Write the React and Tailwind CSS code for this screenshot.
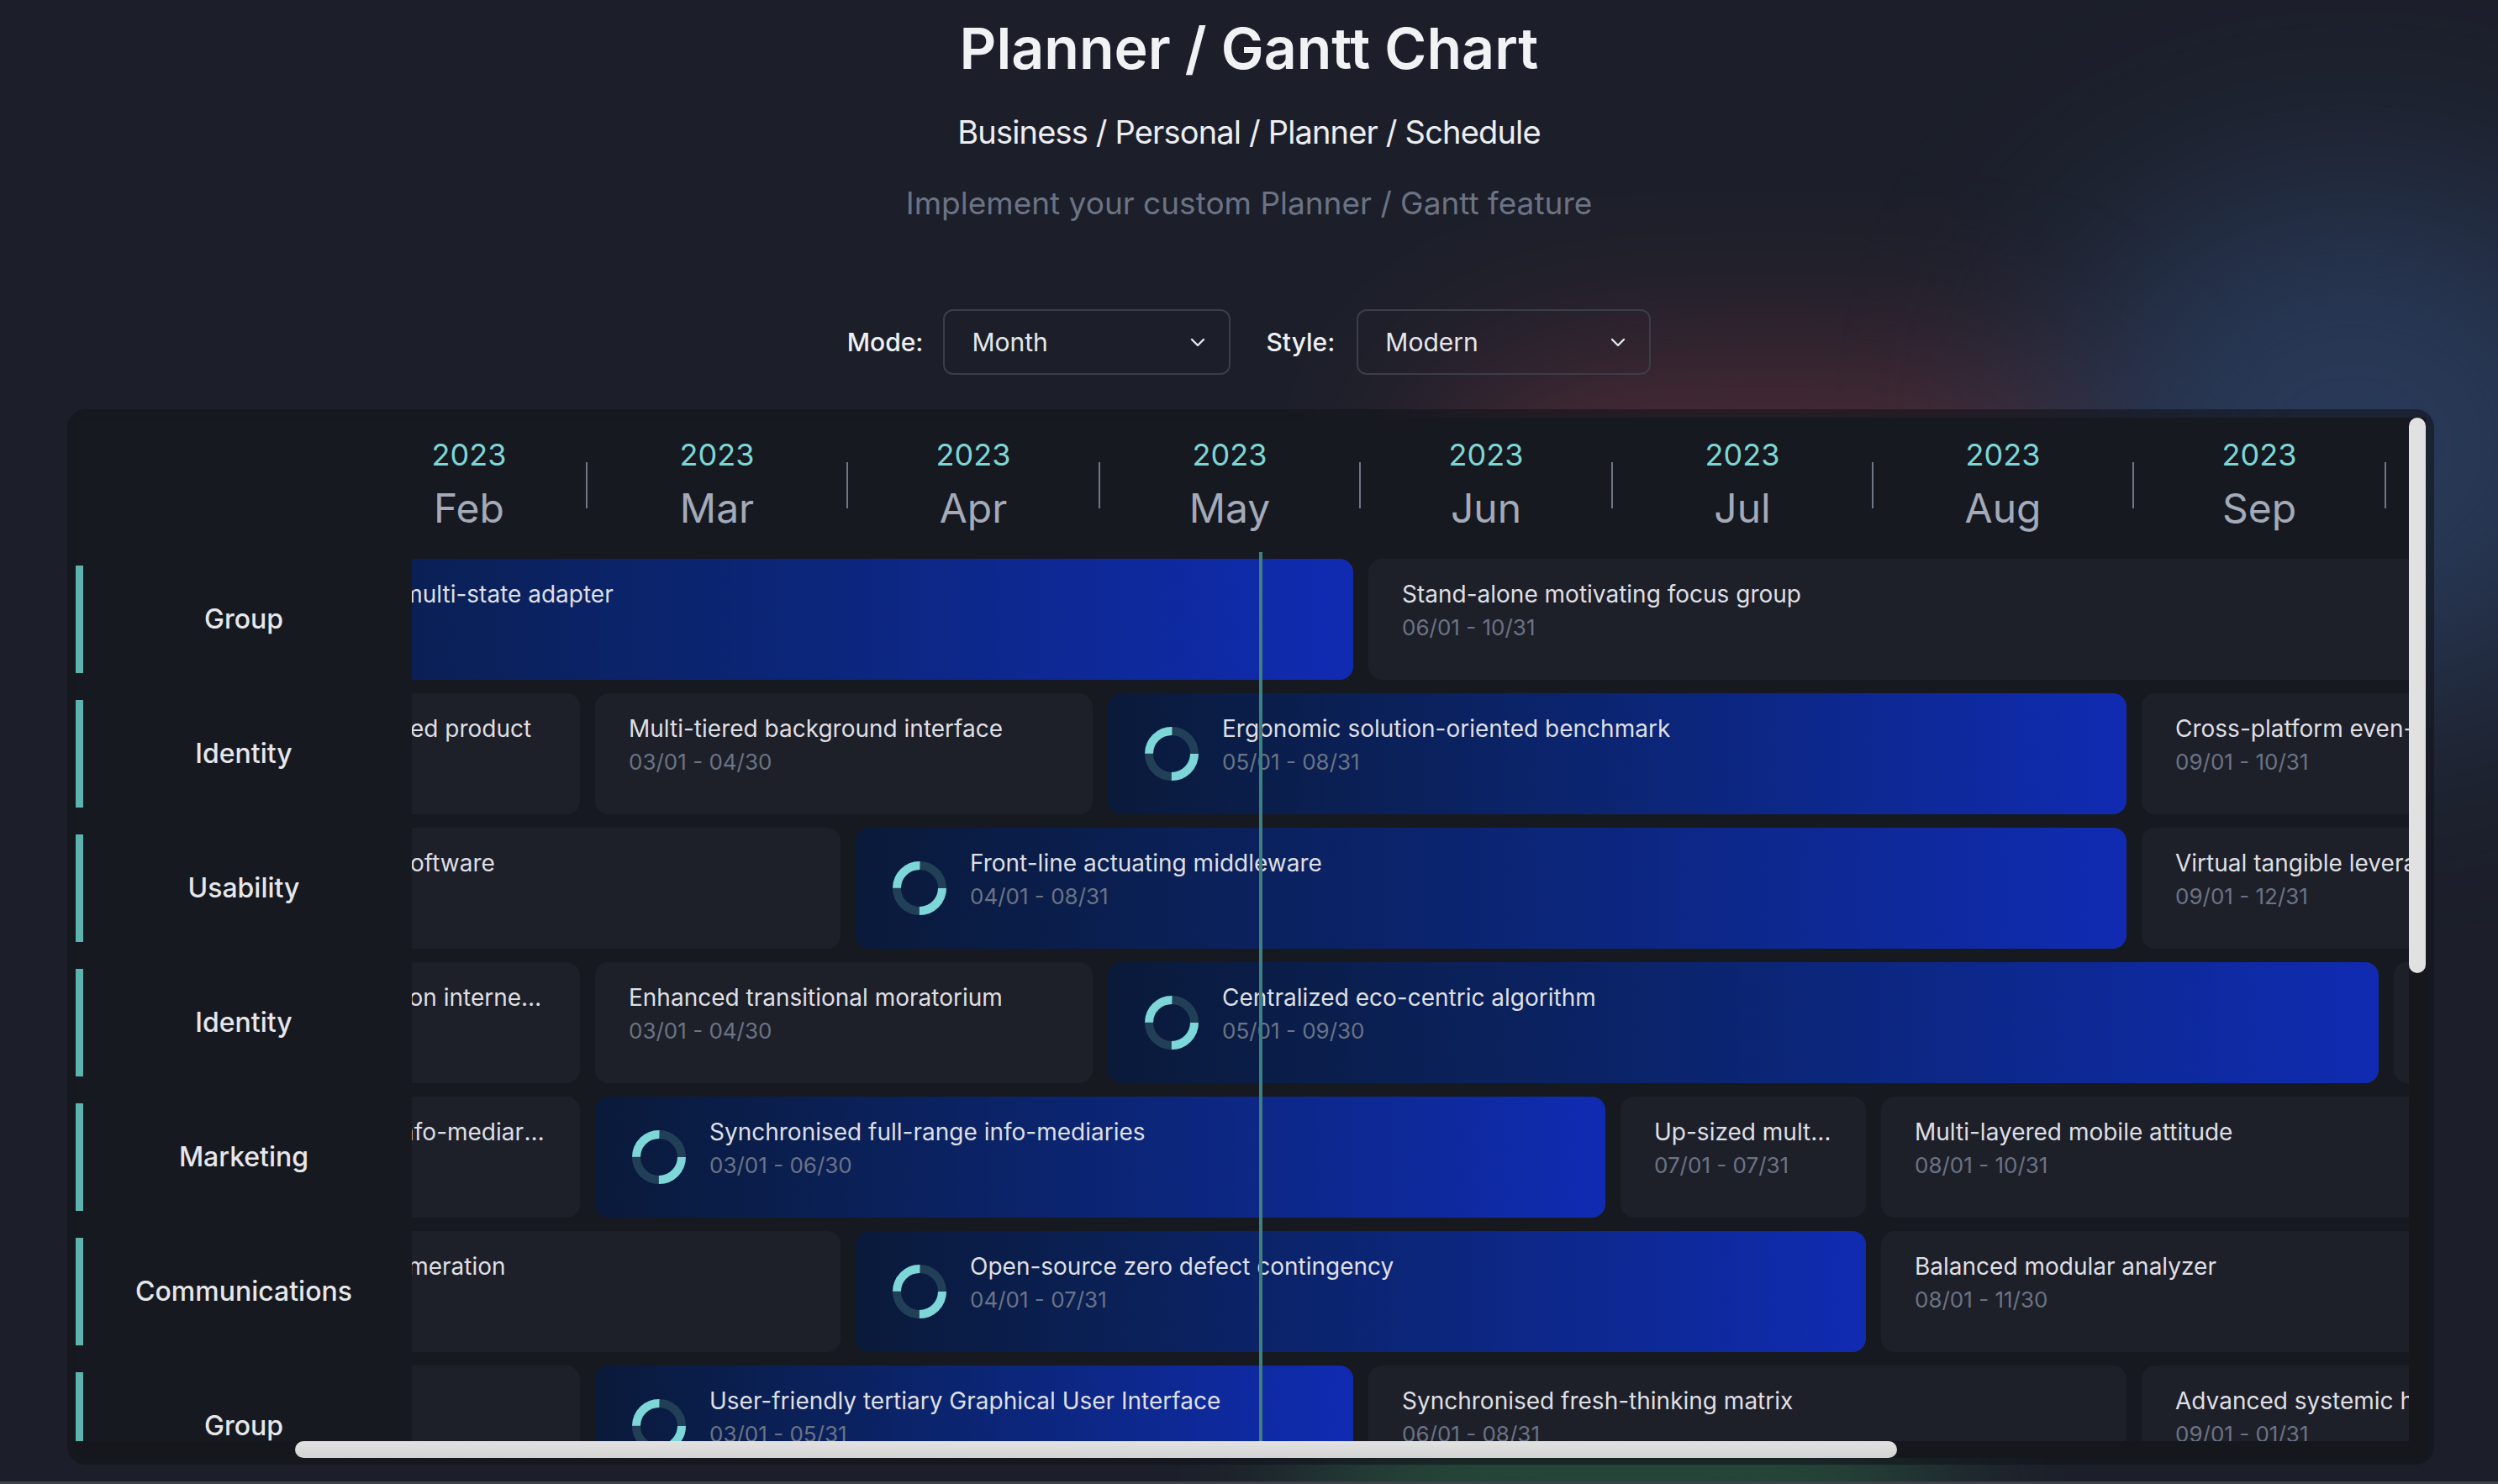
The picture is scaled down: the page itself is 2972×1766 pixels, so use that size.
import React from "react";

// Calendar used by the timeline: one column per month, 10px per day.
const MONTHS = [
  ["Jan", 31], ["Feb", 28], ["Mar", 31], ["Apr", 30], ["May", 31], ["Jun", 30],
  ["Jul", 31], ["Aug", 31], ["Sep", 30], ["Oct", 31], ["Nov", 30], ["Dec", 31],
];
const DAY_PX = 10;
const SIDEBAR_PX = 400;
const SCROLL_X = 381;
const TODAY_PX = 1389;

const MONTH_OFFSET = MONTHS.reduce((acc, [, days], i) => {
  acc.push(i === 0 ? 0 : acc[i - 1] + MONTHS[i - 1][1]);
  return acc;
}, []);

const dayIndex = (md) => {
  const [m, d] = md.split("/").map(Number);
  return MONTH_OFFSET[m - 1] + d - 1;
};

const ROWS = [
  {
    label: "Group",
    tasks: [
      { title: "Re-engineered multi-state adapter", from: "01/03", to: "05/31", active: true },
      { title: "Stand-alone motivating focus group", from: "06/01", to: "10/31" },
      { title: "Quality-focused upward-trending hub", from: "11/01", to: "12/31" },
    ],
  },
  {
    label: "Identity",
    tasks: [
      { title: "Persevering value-added product", from: "01/04", to: "02/28" },
      { title: "Multi-tiered background interface", from: "03/01", to: "04/30" },
      { title: "Ergonomic solution-oriented benchmark", from: "05/01", to: "08/31", active: true },
      { title: "Cross-platform even-keeled database", from: "09/01", to: "10/31" },
      { title: "Diverse global firmware", from: "11/01", to: "12/31" },
    ],
  },
  {
    label: "Usability",
    tasks: [
      { title: "Distributed didactic software", from: "01/06", to: "03/31" },
      { title: "Front-line actuating middleware", from: "04/01", to: "08/31", active: true },
      { title: "Virtual tangible leverage", from: "09/01", to: "12/31" },
    ],
  },
  {
    label: "Identity",
    tasks: [
      { title: "Robust bifurcated function internet solution", from: "01/02", to: "02/28" },
      { title: "Enhanced transitional moratorium", from: "03/01", to: "04/30" },
      { title: "Centralized eco-centric algorithm", from: "05/01", to: "09/30", active: true },
      { title: "Profound dedicated hardware", from: "10/01", to: "12/31" },
    ],
  },
  {
    label: "Marketing",
    tasks: [
      { title: "Seamless interactive info-mediaries", from: "01/04", to: "02/28" },
      { title: "Synchronised full-range info-mediaries", from: "03/01", to: "06/30", active: true },
      { title: "Up-sized multimedia hierarchy", from: "07/01", to: "07/31" },
      { title: "Multi-layered mobile attitude", from: "08/01", to: "10/31" },
      { title: "Open-source bandwidth-monitored frame", from: "11/01", to: "12/31" },
    ],
  },
  {
    label: "Communications",
    tasks: [
      { title: "Vertical user-facing enumeration", from: "01/02", to: "03/31" },
      { title: "Open-source zero defect contingency", from: "04/01", to: "07/31", active: true },
      { title: "Balanced modular analyzer", from: "08/01", to: "11/30" },
    ],
  },
  {
    label: "Group",
    tasks: [
      { title: "Expanded national hub", from: "01/01", to: "02/28" },
      { title: "User-friendly tertiary Graphical User Interface", from: "03/01", to: "05/31", active: true },
      { title: "Synchronised fresh-thinking matrix", from: "06/01", to: "08/31" },
      { title: "Advanced systemic hierarchy", from: "09/01", to: "01/31" },
    ],
  },
];

const Chevron = () => (
  <svg width="18" height="11" viewBox="0 0 18 11" fill="none">
    <polyline points="2,2 9,9 16,2" stroke="currentColor" strokeWidth="2.4" strokeLinecap="round" strokeLinejoin="round" />
  </svg>
);

const Select = ({ value, width }) => (
  <div
    className={`flex h-[78px] items-center justify-between rounded-[12px] border-2 border-[#3a3e49] pl-[32px] pr-[28px] text-[30px] text-[#e5e7eb] ${width}`}
  >
    <span>{value}</span>
    <Chevron />
  </div>
);

// quarter-segment ring shown on tasks that are in progress
const ProgressRing = () => {
  const r = 27;
  const c = 2 * Math.PI * r;
  return (
    <svg width="64" height="64" viewBox="0 0 64 64" className="shrink-0 self-center">
      <circle cx="32" cy="32" r={r} fill="none" stroke="#213f57" strokeWidth="10" />
      <circle cx="32" cy="32" r={r} fill="none" stroke="#7dd6d8" strokeWidth="10" strokeDasharray={`${c / 4} ${c / 4}`} />
    </svg>
  );
};

const TaskBar = ({ task }) => {
  const start = dayIndex(task.from);
  let end = dayIndex(task.to);
  if (end < start) end += 365;
  const style = {
    left: start * DAY_PX + 9,
    width: (end - start + 1) * DAY_PX - 18,
  };
  return (
    <div
      style={style}
      className={`absolute top-0 flex h-[144px] rounded-[16px] pr-[40px] ${
        task.active
          ? "bg-linear-to-r from-[#0a1a3a] to-[#102bb2] pl-[44px]"
          : "bg-[#1e2029] pl-[40px]"
      }`}
    >
      {task.active && <ProgressRing />}
      <div className={`min-w-0 flex-1 pt-[22px] ${task.active ? "ml-[28px]" : ""}`}>
        <p className="truncate text-[28px] leading-[40px] text-[#dedfe3]">{task.title}</p>
        <p className="mt-[4px] text-[26px] leading-[32px] text-[#6b7385]">
          {task.from} - {task.to}
        </p>
      </div>
    </div>
  );
};

const TimelineHeader = () => (
  <div className="flex h-[160px] shrink-0">
    <div className="w-[400px] shrink-0" />
    <div className="min-w-0 flex-1 overflow-hidden">
      <div className="flex h-full w-[3650px] -ml-[381px]">
        {MONTHS.map(([name, days]) => (
          <div key={name} style={{ width: days * DAY_PX }} className="flex shrink-0 items-center">
            <div className="flex flex-1 flex-col items-center">
              <span className="text-[36px] leading-[40px] text-[#7dd6d6]">2023</span>
              <span className="mt-[16px] text-[48px] leading-[56px] text-[#a3aab9]">{name}</span>
            </div>
            <div className="h-[55px] w-[2px] bg-[#6f7686]" />
          </div>
        ))}
      </div>
    </div>
  </div>
);

const TimelineRow = ({ row }) => (
  <div className="flex h-[144px] shrink-0">
    <div className="flex w-[400px] shrink-0 items-center">
      <div className="h-[128px] w-[9px] bg-[#5db3ad]" />
      <span className="flex-1 pr-[9px] text-center text-[32px] font-medium text-[#e6e7ea]">{row.label}</span>
    </div>
    <div className="min-w-0 flex-1 overflow-hidden">
      <div className="relative h-full w-[3650px] -ml-[381px]">
        {row.tasks.map((t) => (
          <TaskBar key={t.title} task={t} />
        ))}
      </div>
    </div>
  </div>
);

export default function App() {
  const todayLeft = SIDEBAR_PX - SCROLL_X + TODAY_PX;
  return (
    <div className="relative flex h-[1766px] flex-col overflow-hidden bg-[#1c1f2a] font-['Inter','Noto_Sans',sans-serif]">
      {/* background haze */}
      <div className="pointer-events-none absolute left-[1700px] top-[440px] h-[360px] w-[800px] rounded-full bg-[#8a3a46] opacity-50 blur-[110px]" />
      <div className="pointer-events-none absolute left-[2450px] top-[230px] h-[600px] w-[700px] rounded-full bg-[#33507f] opacity-55 blur-[130px]" />
      <div className="pointer-events-none absolute left-[1550px] top-[1660px] h-[260px] w-[760px] rounded-full bg-[#2f6a47] opacity-60 blur-[90px]" />

      <div className="relative z-10 flex flex-col items-center pt-[17px] text-center">
        <h1 className="text-[68px] font-semibold leading-[80px] text-[#f1f2f4]">Planner / Gantt Chart</h1>
        <p className="mt-[36px] text-[38px] leading-[48px] tracking-[-0.022em] text-[#eceef1]">
          Business / Personal / Planner / Schedule
        </p>
        <p className="mt-[39px] text-[37px] leading-[44px] text-[#6b7384]">Implement your custom Planner / Gantt feature</p>
      </div>

      <div className="relative z-10 mt-[104px] flex h-[78px] items-center justify-center">
        <span className="mr-[24px] text-[30px] font-medium text-[#eef0f3]">Mode:</span>
        <Select value="Month" width="w-[342px]" />
        <span className="ml-[42px] mr-[26px] text-[30px] font-medium text-[#eef0f3]">Style:</span>
        <Select value="Modern" width="w-[350px]" />
      </div>

      <div className="relative z-10 ml-[80px] mr-[76px] mt-[41px] rounded-[22px] bg-[#12141a]/60 px-[10px] pb-[8px] pt-[10px]">
        <div className="grid grid-cols-[1fr_20px] grid-rows-[1218px_20px]">
          <div className="relative flex flex-col overflow-hidden bg-[#171920]">
            <TimelineHeader />
            <div className="flex flex-col gap-[16px] pt-[8px]">
              {ROWS.map((row, i) => (
                <TimelineRow key={i} row={row} />
              ))}
            </div>
            {/* today marker */}
            <div style={{ left: todayLeft }} className="absolute bottom-0 top-[160px] w-[4px] bg-[#3f7f80]" />
          </div>

          <div className="bg-[#15171c]">
            <div className="h-[661px] w-full rounded-full bg-[#e1e1e1]" />
          </div>
          <div className="bg-[#15171c]">
            <div className="ml-[261px] h-full w-[1906px] rounded-full bg-linear-to-b from-[#e2e2e2] to-[#d3d3d3]" />
          </div>
          <div className="bg-[#15171c]" />
        </div>
      </div>

      <div className="relative z-10 mt-[20px] h-[3px] bg-[#3e4149]" />
    </div>
  );
}
